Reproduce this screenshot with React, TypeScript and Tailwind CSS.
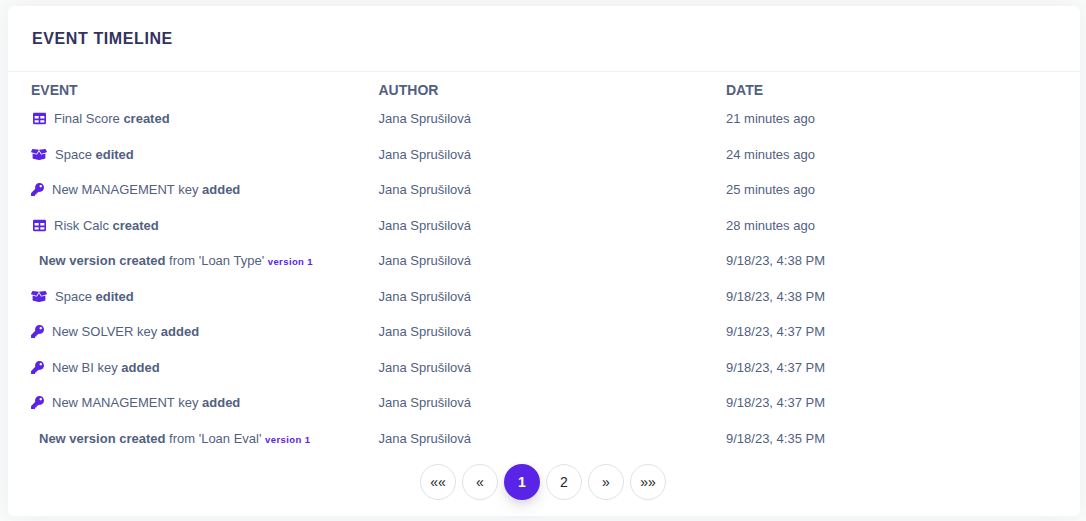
import type { ReactNode } from "react";
import { FaBoxOpen, FaKey, FaTable } from "react-icons/fa";

type Kind = "table" | "box" | "key" | "version";
type Row = { kind: Kind; label: ReactNode; date: string };

const rows: Row[] = [
  { kind: "table", label: <>Final Score <b>created</b></>, date: "21 minutes ago" },
  { kind: "box", label: <>Space <b>edited</b></>, date: "24 minutes ago" },
  { kind: "key", label: <>New MANAGEMENT key <b>added</b></>, date: "25 minutes ago" },
  { kind: "table", label: <>Risk Calc <b>created</b></>, date: "28 minutes ago" },
  { kind: "version", label: <><b>New version created</b> from 'Loan Type' <Version /></>, date: "9/18/23, 4:38 PM" },
  { kind: "box", label: <>Space <b>edited</b></>, date: "9/18/23, 4:38 PM" },
  { kind: "key", label: <>New SOLVER key <b>added</b></>, date: "9/18/23, 4:37 PM" },
  { kind: "key", label: <>New BI key <b>added</b></>, date: "9/18/23, 4:37 PM" },
  { kind: "key", label: <>New MANAGEMENT key <b>added</b></>, date: "9/18/23, 4:37 PM" },
  { kind: "version", label: <><b>New version created</b> from 'Loan Eval' <Version /></>, date: "9/18/23, 4:35 PM" },
];

function Version() {
  return <b className="text-[9.5px] leading-none tracking-[0.4px] text-[#5a24e6]">version 1</b>;
}

function Icon({ kind }: { kind: Kind }) {
  if (kind === "table") return <FaTable className="mr-2 ml-0.5 h-[13px] w-[13px] shrink-0" />;
  if (kind === "box") return <FaBoxOpen className="mr-2 h-[13px] w-4 shrink-0" />;
  if (kind === "key") return <FaKey className="mr-2 h-[13px] w-[13px] shrink-0" />;
  return <span className="w-2" />;
}

const pages = ["««", "«", "1", "2", "»", "»»"];

export default function App() {
  return (
    <main className="h-[521px] overflow-hidden bg-[#fbfbfb] px-2 pt-1.5 font-['Liberation_Sans',Arial,sans-serif] text-[#525f7f]">
      <section className="mr-[-2px] h-[510px] w-[1072px] rounded-md bg-white shadow-[0_0_32px_rgba(136,152,170,0.15)]">
        <header className="flex h-[66px] items-center border-b border-[#f0f1f3] pl-6">
          <h1 className="text-[16px] leading-6 font-bold tracking-[0.6px] text-[#32325d]">EVENT TIMELINE</h1>
        </header>
        <div className="grid h-[29px] grid-cols-[347.5px_347.5px_1fr] pt-2 pl-[23px] text-sm leading-[21px] font-bold">
          <span>EVENT</span>
          <span>AUTHOR</span>
          <span>DATE</span>
        </div>
        {rows.map((row, i) => (
          <div key={i} className="grid h-[35.5px] grid-cols-[347.5px_347.5px_1fr] pt-[7px] pl-[23px] text-[13px] leading-[22px]">
            <div className="flex h-[22px] items-start whitespace-nowrap">
              <span className="flex h-[21px] items-center text-[#5a24e6]"><Icon kind={row.kind} /></span>
              <span>{row.label}</span>
            </div>
            <span>Jana Sprušilová</span>
            <span>{row.date}</span>
          </div>
        ))}
        <nav className="mt-2 flex justify-center gap-1.5 pr-0.5">
          {pages.map((page) => (
            <button
              key={page}
              className={`flex size-9 items-center justify-center rounded-full text-sm ${
                page === "1"
                  ? "bg-[#5a24e6] font-bold text-white shadow-[0_7px_14px_rgba(50,50,93,0.1),0_3px_6px_rgba(0,0,0,0.08)]"
                  : "border border-[#dee2e6] text-[#212529]"
              }`}
            >
              {page}
            </button>
          ))}
        </nav>
      </section>
    </main>
  );
}
